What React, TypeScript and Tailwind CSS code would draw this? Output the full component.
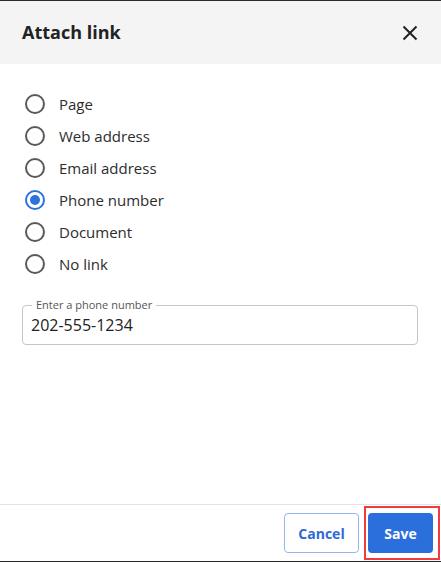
import { useState } from 'react';

const options = [
  'Page',
  'Web address',
  'Email address',
  'Phone number',
  'Document',
  'No link',
];

function Radio({ checked }: { checked: boolean }) {
  return (
    <span
      className={
        checked
          ? 'w-[20px] h-[20px] rounded-full border-2 border-[#2b73d9] flex items-center justify-center'
          : 'w-[20px] h-[20px] rounded-full border-2 border-[#5a5a5a] flex items-center justify-center'
      }
    >
      {checked && <span className="w-[10px] h-[10px] rounded-full bg-[#2b73d9]" />}
    </span>
  );
}

export default function App() {
  const [selected, setSelected] = useState('Phone number');
  const [phone, setPhone] = useState('202-555-1234');

  return (
    <div
      className="w-[441px] h-[562px] flex flex-col bg-white border-t border-b border-[#2b2b2b] text-[#2b2b2b]"
      style={{ fontFamily: '"Open Sans", Lato, sans-serif' }}
    >
      <div className="h-[63px] bg-[#f4f4f4] flex items-center justify-between pl-[22px] pr-[23px]">
        <h2 className="text-[18px] font-bold text-[#222]">Attach link</h2>
        <button className="w-[16px] h-[16px] flex items-center justify-center">
          <svg width="16" height="16" viewBox="0 0 16 16" fill="none" stroke="#222" strokeWidth="2">
            <path d="M1.5 1.5 L14.5 14.5 M14.5 1.5 L1.5 14.5" />
          </svg>
        </button>
      </div>

      <div className="flex-1 pt-[24px] px-[22px] pr-[23px]">
        <div className="flex flex-col">
          {options.map(o => (
            <label
              key={o}
              className="h-[32px] flex items-center gap-[14px] pl-[3px] cursor-pointer"
              onClick={() => setSelected(o)}
            >
              <Radio checked={selected === o} />
              <span className="text-[15px] text-[#2d2d2d]">{o}</span>
            </label>
          ))}
        </div>

        <div className="relative mt-[25px] h-[40px] border border-[#c6c6c6] rounded-[4px] flex items-center px-[8px]">
          <span className="absolute -top-[8px] left-[9px] px-[4px] bg-white text-[11px] leading-[13px] text-[#555]">
            Enter a phone number
          </span>
          <input
            value={phone}
            onChange={e => setPhone(e.target.value)}
            className="w-full outline-none text-[16px] text-[#222] bg-transparent"
          />
        </div>
      </div>

      <div className="relative h-[57px] border-t border-[#e4e4e4] flex items-center justify-end gap-[9px] pr-[8px]">
        <button className="w-[75px] h-[40px] rounded-[4px] border border-[#94b6ee] text-[14px] font-bold text-[#2c6ad6] bg-white">
          Cancel
        </button>
        <button className="w-[65px] h-[40px] rounded-[4px] bg-[#2b6fdc] text-[14px] font-bold text-white">
          Save
        </button>
        <div className="absolute left-[364px] top-[1px] w-[76px] h-[54px] border-2 border-[#f03c3c] pointer-events-none" />
      </div>
    </div>
  );
}
